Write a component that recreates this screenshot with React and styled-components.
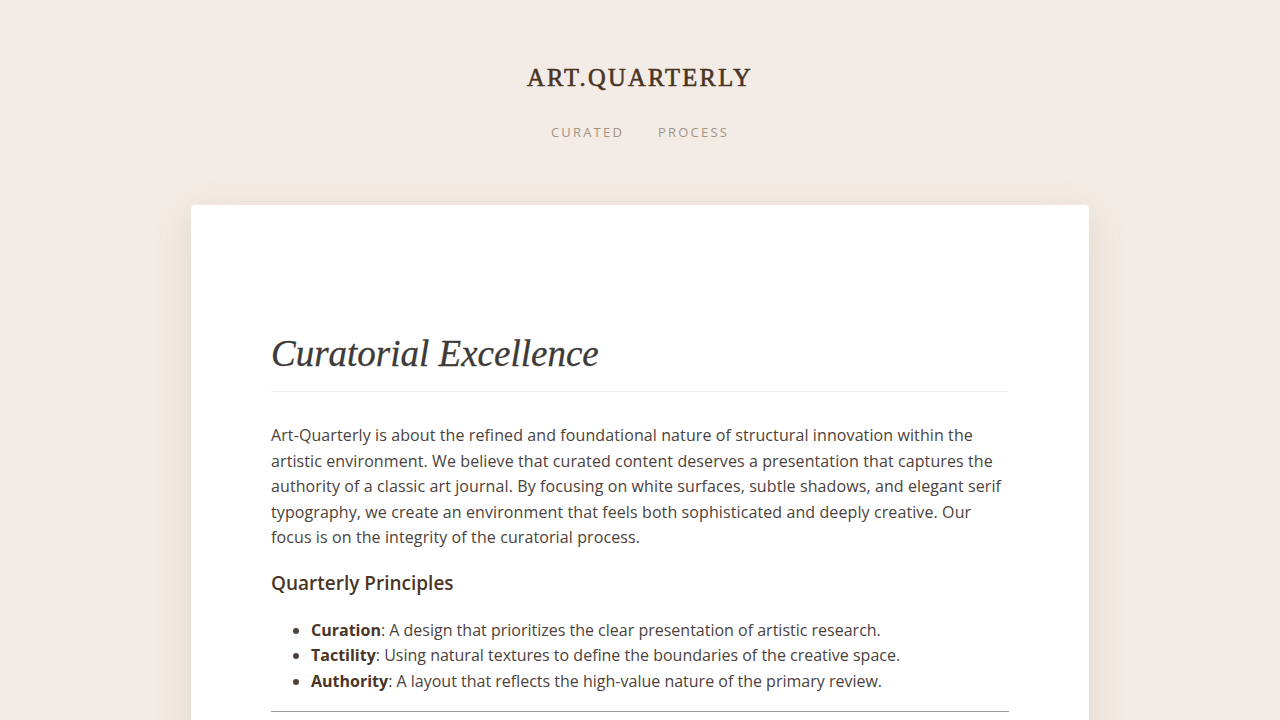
import React from 'react';
import styled, { createGlobalStyle } from 'styled-components';

const GlobalStyle = createGlobalStyle`
  html, body {
    margin: 0;
    padding: 0;
    background: #f3ebe5;
  }

  body {
    font-family: "Open Sans", "Noto Sans", sans-serif;
    color: #4b423c;
  }
`;

const Page = styled.div`
  min-height: 720px;
  display: flex;
  flex-direction: column;
  align-items: center;
`;

const Header = styled.header`
  padding-top: 60px;
  display: flex;
  flex-direction: column;
  align-items: center;
`;

const Brand = styled.h1`
  margin: 0;
  font-family: "Liberation Serif", "DejaVu Serif", serif;
  font-size: 24.5px;
  line-height: 36px;
  font-weight: 400;
  letter-spacing: 2.3px;
  color: #4a3526;
  -webkit-text-stroke: 0.6px #4a3526;
`;

const Nav = styled.nav`
  margin-top: 28px;
  display: flex;
  gap: 34px;
`;

const NavLink = styled.a`
  font-size: 13px;
  line-height: 16px;
  letter-spacing: 2.2px;
  color: #a39384;
  text-decoration: none;
`;

const Card = styled.main`
  margin-top: 65px;
  width: 898px;
  box-sizing: border-box;
  padding: 127px 80px 80px;
  background: #ffffff;
  border-radius: 4px;
  box-shadow: 0 12px 40px rgba(130, 100, 70, 0.16);
`;

const Title = styled.h2`
  margin: 0;
  padding-bottom: 16px;
  border-bottom: 1px solid #eeeeee;
  font-family: "Liberation Serif", "DejaVu Serif", serif;
  font-style: italic;
  font-weight: 400;
  font-size: 37px;
  line-height: 43px;
  color: #3d3a38;
  -webkit-text-stroke: 0.3px #3d3a38;
`;

const Paragraph = styled.p`
  margin: 31px 0 0;
  font-size: 16px;
  line-height: 25.5px;
  letter-spacing: 0.1px;
  color: #4b423c;
`;

const SubTitle = styled.h3`
  margin: 19px 0 0;
  font-size: 19px;
  line-height: 26px;
  font-weight: 600;
  color: #4a3526;
`;

const List = styled.ul`
  margin: 22px 0 0;
  padding-left: 40px;
`;

const Item = styled.li`
  font-size: 16px;
  line-height: 25.5px;

  strong {
    font-weight: 700;
    color: #4a3526;
  }
`;

const Rule = styled.hr`
  margin: 17px 0 0;
  border: 0;
  border-top: 1px solid #9a9a9a;
`;

const principles = [
  ['Curation', 'A design that prioritizes the clear presentation of artistic research.'],
  ['Tactility', 'Using natural textures to define the boundaries of the creative space.'],
  ['Authority', 'A layout that reflects the high-value nature of the primary review.'],
];

export default function App() {
  return (
    <>
      <GlobalStyle />
      <Page>
        <Header>
          <Brand>ART.QUARTERLY</Brand>
          <Nav>
            <NavLink href="#">CURATED</NavLink>
            <NavLink href="#">PROCESS</NavLink>
          </Nav>
        </Header>
        <Card>
          <Title>Curatorial Excellence</Title>
          <Paragraph>
            Art-Quarterly is about the refined and foundational nature of structural innovation within the
            artistic environment. We believe that curated content deserves a presentation that captures the
            authority of a classic art journal. By focusing on white surfaces, subtle shadows, and elegant serif
            typography, we create an environment that feels both sophisticated and deeply creative. Our
            focus is on the integrity of the curatorial process.
          </Paragraph>
          <SubTitle>Quarterly Principles</SubTitle>
          <List>
            {principles.map(([name, text]) => (
              <Item key={name}>
                <strong>{name}</strong>: {text}
              </Item>
            ))}
          </List>
          <Rule />
        </Card>
      </Page>
    </>
  );
}
